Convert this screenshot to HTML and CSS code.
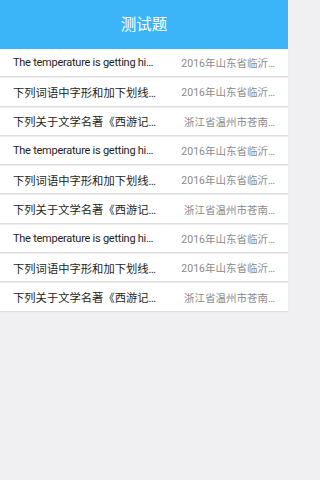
FILE: index.html
```html
<!DOCTYPE html>
<html lang="zh">
<head>
<meta charset="utf-8">
<title>测试题</title>
<link rel="stylesheet" href="styles.css">
</head>
<body>
<div class="app">
  <header class="bar"><h1 class="bar-title">测试题</h1></header>
  <ul class="list">
    <li class="row"><span class="q q-en">The temperature is getting hi…</span><span class="src">2016年山东省临沂…</span></li>
    <li class="row"><span class="q q-zh">下列词语中字形和加下划线…</span><span class="src">2016年山东省临沂…</span></li>
    <li class="row"><span class="q q-zh">下列关于文学名著《西游记…</span><span class="src">浙江省温州市苍南…</span></li>
    <li class="row"><span class="q q-en">The temperature is getting hi…</span><span class="src">2016年山东省临沂…</span></li>
    <li class="row"><span class="q q-zh">下列词语中字形和加下划线…</span><span class="src">2016年山东省临沂…</span></li>
    <li class="row"><span class="q q-zh">下列关于文学名著《西游记…</span><span class="src">浙江省温州市苍南…</span></li>
    <li class="row"><span class="q q-en">The temperature is getting hi…</span><span class="src">2016年山东省临沂…</span></li>
    <li class="row"><span class="q q-zh">下列词语中字形和加下划线…</span><span class="src">2016年山东省临沂…</span></li>
    <li class="row"><span class="q q-zh">下列关于文学名著《西游记…</span><span class="src">浙江省温州市苍南…</span></li>
  </ul>
</div>
</body>
</html>
```
FILE: styles.css
```css
* { box-sizing: border-box; }
html, body {
  margin: 0;
  padding: 0;
  height: 100%;
  background: #f0f0f2;
  font-family: Roboto, "Noto Sans CJK SC", sans-serif;
}
.app {
  width: 288px;
  display: flex;
  flex-direction: column;
  min-height: 100%;
}
.bar {
  height: 49px;
  background: #3cb5f8;
  display: flex;
  align-items: center;
  justify-content: center;
}
.bar-title {
  margin: 0;
  color: #ffffff;
  font-size: 15.5px;
  font-weight: normal;
  line-height: 1;
  padding-top: 3px;
}
.list {
  list-style: none;
  margin: 0;
  padding: 0;
  display: flex;
  flex-direction: column;
  gap: 2px;
}
.row {
  height: 27.3px;
  background: #ffffff;
  display: flex;
  align-items: center;
  justify-content: space-between;
  padding: 0 13px;
  box-shadow: 0 1px 1px rgba(0, 0, 0, 0.07);
  white-space: nowrap;
}
.q {
  color: #1e1e1e;
}
.q-en {
  font-size: 11px;
  letter-spacing: -0.25px;
}
.q-zh {
  font-size: 11.3px;
}
.src {
  color: #8a8a8a;
  font-size: 10.5px;
  text-align: right;
}
```
